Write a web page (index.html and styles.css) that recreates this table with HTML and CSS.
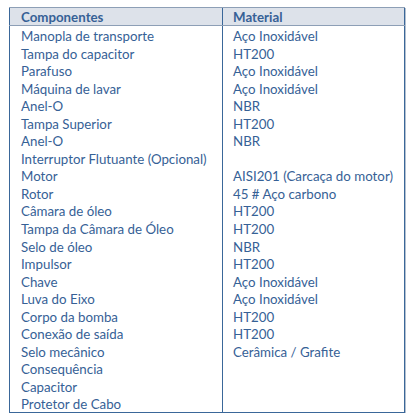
FILE: index.html
```html
<!DOCTYPE html>
<html lang="pt">
<head>
<meta charset="utf-8">
<link rel="stylesheet" href="styles.css">
</head>
<body>
<div class="wrap">
<table class="parts">
<colgroup><col class="c1"><col class="c2"></colgroup>
<thead>
<tr><th>Componentes</th><th>Material</th></tr>
</thead>
<tbody>
<tr><td>Manopla de transporte</td><td>Aço Inoxidável</td></tr>
<tr><td>Tampa do capacitor</td><td>HT200</td></tr>
<tr><td>Parafuso</td><td>Aço Inoxidável</td></tr>
<tr><td>Máquina de lavar</td><td>Aço Inoxidável</td></tr>
<tr><td>Anel-O</td><td>NBR</td></tr>
<tr><td>Tampa Superior</td><td>HT200</td></tr>
<tr><td>Anel-O</td><td>NBR</td></tr>
<tr><td>Interruptor Flutuante (Opcional)</td><td></td></tr>
<tr><td>Motor</td><td>AISI201 (Carcaça do motor)</td></tr>
<tr><td>Rotor</td><td>45 # Aço carbono</td></tr>
<tr><td>Câmara de óleo</td><td>HT200</td></tr>
<tr><td>Tampa da Câmara de Óleo</td><td>HT200</td></tr>
<tr><td>Selo de óleo</td><td>NBR</td></tr>
<tr><td>Impulsor</td><td>HT200</td></tr>
<tr><td>Chave</td><td>Aço Inoxidável</td></tr>
<tr><td>Luva do Eixo</td><td>Aço Inoxidável</td></tr>
<tr><td>Corpo da bomba</td><td>HT200</td></tr>
<tr><td>Conexão de saída</td><td>HT200</td></tr>
<tr><td>Selo mecânico</td><td>Cerâmica / Grafite</td></tr>
<tr><td>Consequência</td><td></td></tr>
<tr><td>Capacitor</td><td></td></tr>
<tr><td>Protetor de Cabo</td><td></td></tr>
</tbody>
</table>
</div>
</body>
</html>
```
FILE: styles.css
```css
html, body {
  margin: 0;
  background: #ffffff;
}
.wrap {
  padding: 7px 0 0 9px;
}
.parts {
  width: 395px;
  table-layout: fixed;
  border-collapse: collapse;
  border: 1px solid #3a6799;
  box-shadow: 1px 1px 0 #b4c0cf;
  font-family: Lato, "Open Sans", sans-serif;
  font-size: 13.3px;
  color: #366196;
}
.c1 { width: 213px; }
.c2 { width: 182px; }
.parts th {
  height: 15px;
  padding: 2px 0 0 11px;
  background: #dde2ea;
  border-bottom: 1px solid #8d9fb6;
  border-top: 1px solid #8d9fb6;
  text-align: left;
  font-weight: bold;
  line-height: 15px;
}
.parts th + th,
.parts td + td {
  border-left: 1px solid #3a6799;
  padding-left: 10px;
}
.parts td {
  height: 14.55px;
  padding: 3px 0 0 11px;
  line-height: 14.55px;
  white-space: nowrap;
}
```
